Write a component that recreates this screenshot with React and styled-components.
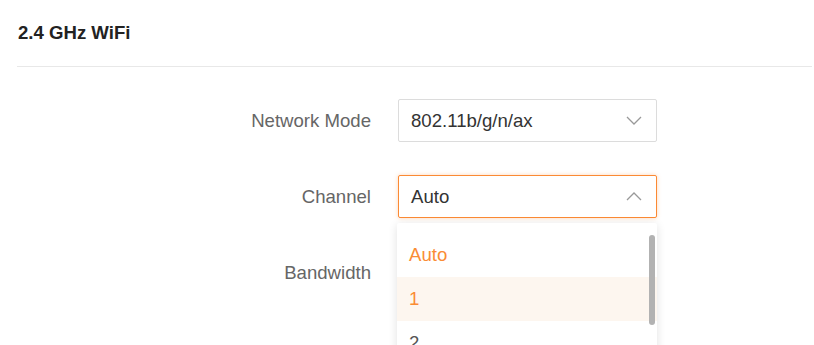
import styled, { createGlobalStyle } from "styled-components";

const GlobalStyle = createGlobalStyle`
  html, body {
    height: 100%;
    overflow: hidden;
  }
  body {
    margin: 0;
    padding: 0;
    background: #fff;
    font-family: "Liberation Sans", Arial, sans-serif;
  }
`;

const channels = ["Auto", "1", "2", "3", "4"];

function ChevronDown() {
  return (
    <svg width="16" height="9" viewBox="0 0 16 9" fill="none">
      <path d="M1 1l7 7 7-7" stroke="#999" strokeWidth="1.3" />
    </svg>
  );
}

function ChevronUp() {
  return (
    <svg width="16" height="9" viewBox="0 0 16 9" fill="none">
      <path d="M1 8l7-7 7 7" stroke="#999" strokeWidth="1.3" />
    </svg>
  );
}

export default function App() {
  return (
    <>
      <GlobalStyle />
      <Page>
        <Header>
          <Title>2.4 GHz WiFi</Title>
        </Header>
        <Form>
          <Label>Network Mode</Label>
          <SelectBox>
            <span>802.11b/g/n/ax</span>
            <ChevronDown />
          </SelectBox>

          <Label>Channel</Label>
          <SelectWrap>
            <SelectBox $open>
              <span>Auto</span>
              <ChevronUp />
            </SelectBox>
            <Dropdown>
              {channels.map((c, i) => (
                <Option key={c} $selected={i === 0} $hover={i === 1}>
                  {c}
                </Option>
              ))}
              <ScrollThumb />
            </Dropdown>
          </SelectWrap>

          <Label>Bandwidth</Label>
          <div />
        </Form>
      </Page>
    </>
  );
}

const Page = styled.div`
  height: 345px;
  overflow: hidden;
  padding: 0 2px 0 17px;
`;

const Header = styled.div`
  height: 66px;
  display: flex;
  align-items: center;
  border-bottom: 1px solid #e8e8e8;
`;

const Title = styled.h2`
  margin: 0 0 0 1px;
  font-size: 18.6px;
  font-weight: 700;
  color: #222;
`;

const Form = styled.div`
  display: grid;
  grid-template-columns: 354px 259px;
  grid-auto-rows: 43px;
  column-gap: 27px;
  row-gap: 33px;
  margin-top: 32px;
`;

const Label = styled.div`
  display: flex;
  align-items: center;
  justify-content: flex-end;
  font-size: 18.6px;
  color: #666;
`;

const SelectWrap = styled.div`
  position: relative;
`;

const SelectBox = styled.div`
  box-sizing: border-box;
  height: 43px;
  display: flex;
  align-items: center;
  justify-content: space-between;
  padding: 0 14px 0 12px;
  border: 1px solid ${(p) => (p.$open ? "#fb8a34" : "#dcdcdc")};
  border-radius: 2px;
  box-shadow: ${(p) => (p.$open ? "0 0 4px rgba(251, 138, 52, 0.35)" : "none")};
  font-size: 18.6px;
  color: #333;
  background: #fff;
`;

const Dropdown = styled.div`
  position: absolute;
  top: 48px;
  left: -1px;
  width: 260px;
  height: 190px;
  padding-top: 10px;
  box-sizing: border-box;
  overflow: hidden;
  background: #fff;
  border-radius: 2px;
  box-shadow: 0 2px 10px rgba(0, 0, 0, 0.12);
  z-index: 10;
`;

const Option = styled.div`
  height: 44px;
  display: flex;
  align-items: center;
  padding-left: 12px;
  font-size: 18.6px;
  color: ${(p) => (p.$selected || p.$hover ? "#fa8c35" : "#555")};
  background: ${(p) => (p.$hover ? "#fdf6ef" : "transparent")};
`;

const ScrollThumb = styled.div`
  position: absolute;
  top: 12px;
  right: 2px;
  width: 6px;
  height: 90px;
  border-radius: 4px;
  background: #b2b2b2;
`;
